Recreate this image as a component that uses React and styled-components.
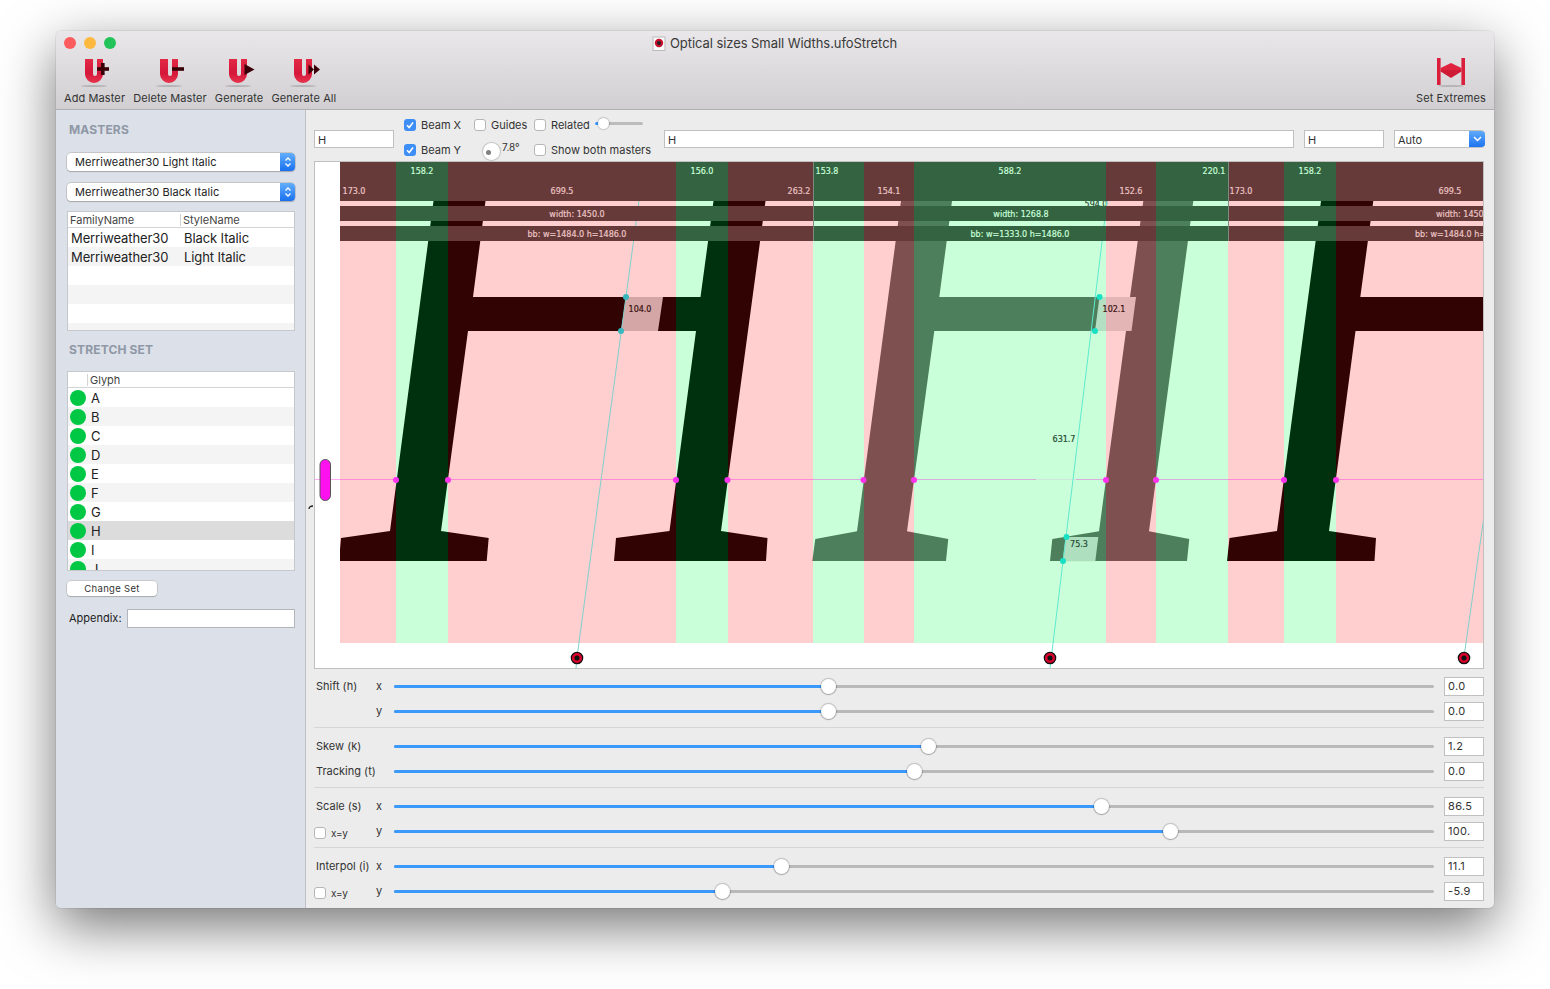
import React from "react";
import styled, { createGlobalStyle } from "styled-components";

const Global = createGlobalStyle`
  html, body { margin: 0; height: 100%; overflow: hidden; background: #fff; }
  body { font-family: Inter, "Liberation Sans", sans-serif; color: #222; -webkit-font-smoothing: antialiased; }
  * { box-sizing: border-box; }
`;

const Win = styled.div`
  position: relative; width: 1438px; height: 877px; margin: 31px 0 0 56px;
  border-radius: 5px; overflow: hidden; display: flex; flex-direction: column; background: #ececec;
  box-shadow: 0 0 0 .5px rgba(0,0,0,.12), 0 18px 55px rgba(0,0,0,.55);
`;

const Toolbar = styled.header`
  position: relative; height: 79px; flex: none; display: flex; justify-content: space-between;
  padding: 0 8px; background: linear-gradient(#e9e7e9, #d1cfd1); border-bottom: 1px solid #b0b0b0;
`;
const Lights = styled.div`
  position: absolute; left: 8px; top: 6px; display: flex; gap: 8px;
`;
const Light = styled.span`
  width: 12px; height: 12px; border-radius: 50%; background: ${p => p.$c};
`;
const Title = styled.div`
  position: absolute; left: 596px; top: 4px; display: flex; align-items: center; gap: 4px;
  font-size: 13px; line-height: 16px; color: #3a3a3a; white-space: nowrap; letter-spacing: -.07px;
`;
const ToolGroup = styled.div`
  display: flex; gap: 8px;
`;
const Tool = styled.div`
  display: flex; flex-direction: column; align-items: center; padding-top: 25px;
`;
const ToolSvg = styled.svg`
  width: 30px; height: 32px; overflow: visible; display: block;
`;
const ToolLabel = styled.span`
  margin-top: 3px; font-size: 11px; line-height: 14px; color: #333; white-space: nowrap; letter-spacing: .1px;
`;

const Body = styled.div`
  flex: 1; display: flex; min-height: 0; position: relative;
`;
const Side = styled.aside`
  width: 250px; flex: none; padding: 0 10px 0 11px; background: #dce0e8; border-right: 1px solid #bfc1c4;
  display: flex; flex-direction: column;
`;
const Heading = styled.h2`
  margin: ${p => p.$top}px 0 0 2px; font-size: 12px; line-height: 14px; font-weight: 700; color: #8f98a6; letter-spacing: .15px;
`;
const Popup = styled.div`
  margin-top: ${p => p.$top}px; height: 18px; flex: none; display: flex; align-items: center; justify-content: space-between;
  background: #fff; border-radius: 4px; box-shadow: 0 0 0 .5px #a9a9a9, 0 1px 1px rgba(0,0,0,.25);
  font-size: 11px; padding-left: 8px; overflow: hidden; color: #222; letter-spacing: .06px;
`;
const Stepper = styled.span`
  width: 15px; height: 100%; display: flex; align-items: center; justify-content: center;
  background: linear-gradient(#62aefc, #1a70ef);
`;
const Table = styled.div`
  margin-top: ${p => p.$top}px; height: ${p => p.$h}px; flex: none; background: #fff; border: 1px solid #c6c8cb; overflow: hidden;
`;
const THead = styled.div`
  height: 16px; display: flex; align-items: center; border-bottom: 1px solid #d4d4d4; font-size: 11px; color: #444;
`;
const THCell = styled.span`
  width: ${p => p.$w}px; height: 12px; line-height: 12px; padding-left: 2px;
  & + & { border-left: 1px solid #d4d4d4; }
`;
const Row = styled.div`
  height: 19px; display: flex; align-items: center; font-size: 13px; color: #222; letter-spacing: -.1px;
  background: ${p => (p.$sel ? "#dcdcdc" : p.$alt ? "#f4f4f4" : "#fff")};
`;
const TCell = styled.span`
  width: ${p => p.$w}px; padding-left: 3px; white-space: nowrap;
`;
const Dot = styled.span`
  width: 16px; height: 16px; margin-left: 2px; border-radius: 50%; background: #00c844; flex: none;
`;
const Letter = styled.span`
  margin-left: 5px;
`;
const SmallBtn = styled.button`
  margin-top: 10px; width: 90px; height: 15px; padding: 0; border: 0; border-radius: 4px; background: #fff;
  box-shadow: 0 0 0 .5px #b0b0b0, 0 1px 1px rgba(0,0,0,.25); font: 9.5px/15px Inter, sans-serif; color: #333; letter-spacing: .3px;
`;
const AppendixRow = styled.div`
  margin-top: 13px; display: flex; align-items: center; font-size: 11px; padding-left: 2px; color: #222;
`;
const AppendixLabel = styled.span`
  margin-bottom: 2px;
`;
const AppendixField = styled.div`
  width: 168px; height: 19px; margin-left: auto; background: #fff; border: 1px solid #b2b5ba;
`;

const Main = styled.main`
  flex: 1; min-width: 0; padding: 0 10px 0 8px; display: flex; flex-direction: column; position: relative;
`;
const Tick = styled.svg`
  position: absolute; left: 2px; top: 394px; width: 6px; height: 6px;
`;
const TopBar = styled.div`
  height: 51px; flex: none; display: flex; align-items: flex-start; gap: 10px; padding-top: 20px; margin-right: -1px;
`;
const Field = styled.div`
  height: 18px; flex: ${p => (p.$grow ? "1" : "none")}; width: ${p => p.$w || 80}px; background: #fff; border: 1px solid #c0c0c0;
  font-size: 11px; line-height: 18px; padding-left: 3px; color: #333;
`;
const Options = styled.div`
  width: 250px; flex: none; margin-top: -17px; position: relative; z-index: 2;
`;
const OptRow = styled.div`
  height: ${p => p.$h}px; display: flex;
`;
const OptCell = styled.div`
  width: ${p => p.$w}px; display: flex; align-items: ${p => (p.$top ? "flex-start" : "center")}; font-size: 11px; color: #333; white-space: nowrap;
`;
const Box = styled.span`
  width: 12px; height: 12px; flex: none; border-radius: 3px; margin-right: 5px; display: flex; align-items: center; justify-content: center;
  background: ${p => (p.$on ? "#3d8ff7" : "#fff")}; border: ${p => (p.$on ? "0" : "1px solid #b6b6b6")};
`;
const MiniTrack = styled.span`
  position: absolute; left: 191px; top: 9px; width: 48px; height: 3px; border-radius: 2px;
  background: linear-gradient(90deg, #3b99fc 0 6px, #bcbcbc 6px);
`;
const MiniKnob = styled.span`
  position: absolute; left: 194px; top: 5px; width: 11px; height: 11px; border-radius: 50%; background: #fff; box-shadow: 0 0 1px 1px rgba(0,0,0,.18);
`;
const Dial = styled.span`
  width: 17px; height: 17px; margin: 6px 0 0 9px; flex: none; border-radius: 50%; background: #fff;
  box-shadow: 0 0 1px 1px rgba(0,0,0,.18); position: relative;
  &::after { content: ""; position: absolute; left: 3px; top: 7px; width: 5px; height: 5px; border-radius: 50%; background: #808080; }
`;
const DialText = styled.span`
  margin: 4px 0 0 2px; font-size: 10px; line-height: 12px; color: #333;
`;
const Auto = styled.div`
  width: 91px; height: 18px; flex: none; display: flex; justify-content: space-between; background: #fff; border: 1px solid #c0c0c0; border-right: 0;
  font-size: 11px; line-height: 18px; padding-left: 3px; border-radius: 0 4px 4px 0; overflow: hidden; color: #333;
`;
const AutoBtn = styled.span`
  width: 16px; margin-top: -1px; height: 18px; display: flex; align-items: center; justify-content: center; background: linear-gradient(#62aefc, #1a70ef);
`;

const CanvasBox = styled.div`
  height: 508px; flex: none; background: #fff; border: 1px solid #c0c0c0;
`;
const CanvasSvg = styled.svg`
  display: block; width: 1168px; height: 506px; font-family: "DejaVu Sans", sans-serif; font-size: 8px;
`;
const Measure = styled.text`
  fill: ${p => p.$c}; stroke: ${p => p.$c}; stroke-width: .2px; text-anchor: ${p => (p.$start ? "start" : "middle")};
`;

const Group = styled.section`
  padding: 6px 0 3px; border-bottom: ${p => (p.$last ? "0" : "1px solid #d6d6d6")};
  &:first-of-type { padding-top: 5px; }
`;
const SRow = styled.div`
  height: 25px; display: grid; grid-template-columns: 62px 18px 1040px 40px; align-items: center; font-size: 11px; color: #333;
`;
const SLabel = styled.div`
  display: flex; align-items: center; padding-left: ${p => (p.$chk ? 0 : 2)}px; white-space: nowrap;
  font-size: ${p => (p.$chk ? 10 : 11)}px; margin-top: ${p => (p.$chk ? 2 : -2)}px;
`;
const SliderTrack = styled.div`
  position: relative; height: 3px; border-radius: 2px; background: #b9b9b9;
`;
const SliderFill = styled.div`
  height: 100%; width: ${p => p.$x}px; border-radius: 2px; background: #3b99fc;
`;
const Knob = styled.div`
  position: absolute; top: -6px; left: ${p => p.$x - 7.5}px; width: 15px; height: 15px; border-radius: 50%;
  background: #fff; box-shadow: 0 0 1px 1px rgba(0,0,0,.2), 0 1px 1px rgba(0,0,0,.15);
`;
const ValueBox = styled.div`
  width: 40px; height: 19px; background: #fff; border: 1px solid #c0c0c0; font-size: 11px; line-height: 17px; padding-left: 3px; letter-spacing: .35px; color: #333;
  grid-column: 4; margin-left: 10px;
`;
const Track = styled.div`
  grid-column: 3;
`;
const Axis = styled.div`
  grid-column: 2; margin-top: -1px;
`;

const Chev = () => (
  <svg width="8" height="12" viewBox="0 0 8 12"><path d="M1.5 4.5 4 2l2.5 2.5M1.5 7.5 4 10l2.5-2.5" fill="none" stroke="#fff" strokeWidth="1.3" /></svg>
);
const Check = () => (
  <svg width="10" height="10" viewBox="0 0 10 10"><path d="M2 5.3 4.2 7.6 8 2.6" fill="none" stroke="#fff" strokeWidth="1.6" /></svg>
);

const UDefs = () => (
  <defs>
    <linearGradient id="ug" x1="0" y1="0" x2="0" y2="1">
      <stop offset="0" stopColor="#e22a44" /><stop offset=".6" stopColor="#d5173a" /><stop offset="1" stopColor="#e8344e" />
    </linearGradient>
  </defs>
);
const U = () => (
  <>
    <ellipse cx="14" cy="30" rx="13" ry="1" fill="#000" opacity=".16" />
    <path d="M5 3H13V18a2 2 0 0 0 4 0V3H23V18a9 9 0 0 1-18 0Z" fill="url(#ug)" />
  </>
);
const glyphDark = "#3a0008";
const ToolIcons = {
  add: <><rect x="17" y="11.2" width="12" height="3.6" fill={glyphDark} /><rect x="21" y="7" width="3.6" height="12" fill={glyphDark} /></>,
  del: <rect x="17" y="11.2" width="12" height="3.6" fill={glyphDark} />,
  gen: <polygon points="20.5,8 30.5,13.5 20.5,19" fill={glyphDark} />,
  all: <><polygon points="19.5,8.5 25,13.5 19.5,18.5" fill={glyphDark} /><polygon points="25,8.5 31,13.5 25,18.5" fill={glyphDark} /></>,
};
const tools = [["Add Master", "add"], ["Delete Master", "del"], ["Generate", "gen"], ["Generate All", "all"]];

const pinkLight = "#ffcfcf", greenLight = "#c9ffd9";
const bands = [
  [340, 396, 0], [396, 448, 1], [448, 676, 0], [676, 728, 1], [728, 813, 0], [813, 864, 1], [864, 914, 0],
  [914, 1106, 1], [1106, 1156, 0], [1156, 1228, 1], [1228, 1284, 0], [1284, 1336, 1], [1336, 1483, 0],
];
const Bands = ({ pink, green, y = 162, h = 481 }) =>
  bands.map(([a, b, g]) => <rect key={a} x={a} y={y} width={b - a} height={h} fill={g ? green : pink} />);

const glyph1 = "339,561 341,538 390,531 433.5,201 485.5,201 473,297 700.5,297 713.5,201 765.5,201 721,531 767.5,538 766,561 614,561 616,538 669.5,531 696,331 468,331 441,531 488.7,538 486.7,561";
const glyph2 = "812.3,561 815.3,539 857,531.3 901,201 952,201 939.3,297 1130,297 1143.3,201 1193.3,201 1149,531.3 1189.3,539 1187,561 1050,561 1052.3,539 1099,531.3 1126,331 934.3,331 907,531.3 948.3,539 946,561";
const glyph3 = "1227,561 1229.5,538 1277,531 1321,201 1373.3,201 1360.3,297 1484,297 1484,331 1355.5,331 1329,531 1376,538 1374.5,561";

const pinkT = "#ebc4c4", greenT = "#c9ffd9";
const Canvas = () => (
  <CanvasSvg viewBox="315 162 1168 506">
    <defs>
      <clipPath id="g1"><polygon points={glyph1} /><polygon points={glyph3} /></clipPath>
      <clipPath id="g2"><polygon points={glyph2} /></clipPath>
    </defs>
    <Bands pink={pinkLight} green={greenLight} />
    <line x1="315" y1="479.5" x2="1483" y2="479.5" stroke="#ff00e6" strokeOpacity=".32" />
    <line x1="1036" y1="479.5" x2="1076" y2="479.5" stroke={greenLight} strokeOpacity=".7" />
    <g clipPath="url(#g1)"><Bands pink="#310303" green="#00310f" /></g>
    <g clipPath="url(#g2)"><Bands pink="#7e5050" green="#4d7f5c" /></g>
    <polygon points="626,297 663,297 658,331 621,331" fill="#d4a6a6" />
    <polygon points="1099.5,297 1106,297 1106,331 1095,331" fill="#b5dfc3" />
    <polygon points="1106,297 1136,297 1131.5,331 1106,331" fill="#e3b5b5" />
    <polygon points="1065.7,537 1098.3,537 1095.3,561.3 1062.7,561.3" fill="#aee0bf" />

    <Measure x="1096" y="207" $c="#2b4a36">594.0</Measure>
    <line x1="577" y1="657" x2="639" y2="201" stroke="#7fd0cc" />
    <line x1="1464" y1="657" x2="1484" y2="516" stroke="#7fd0cc" />
    <line x1="1050" y1="668" x2="1107" y2="201" stroke="#5fe8cf" />
    <line x1="576" y1="668" x2="577" y2="657" stroke="#7fd0cc" />

    <Bands pink="#673a3a" green="#336340" y={162} h={39} />
    <Bands pink="#673a3a" green="#336340" y={206} h={15} />
    <Bands pink="#673a3a" green="#336340" y={226} h={15} />
    <line x1="813.5" y1="162" x2="813.5" y2="241" stroke="#7c8a80" strokeWidth="1" />
    <line x1="1228.5" y1="162" x2="1228.5" y2="241" stroke="#7c8a80" strokeWidth="1" />

    {[396, 448, 676, 727.5, 863.5, 914, 1106, 1156, 1284, 1336].map(x => (
      <circle key={x} cx={x} cy="480" r="3" fill="#ff33ee" />
    ))}
    {[[626, 297], [621, 331]].map(([x, y]) => <circle key={x} cx={x} cy={y} r="3" fill="#38b8bd" />)}
    {[[1099.5, 297], [1095, 331], [1066.5, 537], [1063, 561]].map(([x, y]) => <circle key={x} cx={x} cy={y} r="3" fill="#18e0c4" />)}

    <rect x="320" y="459.5" width="10.5" height="41" rx="5.2" fill="#ff10ee" stroke="#555" strokeWidth="1" />
    {[577, 1050, 1464].map(x => (
      <g key={x}>
        <circle cx={x} cy="658" r="5.7" fill="#d8002c" stroke="#111" strokeWidth="1.2" />
        <circle cx={x} cy="658" r="2.5" fill="#111" />
      </g>
    ))}

    {[[422, "158.2"], [702, "156.0"], [827, "153.8"], [1010, "588.2"], [1214, "220.1"], [1310, "158.2"]].map(([x, t]) => (
      <Measure key={x} x={x} y="174" $c={greenT}>{t}</Measure>
    ))}
    {[[354, "173.0"], [562, "699.5"], [799, "263.2"], [889, "154.1"], [1131, "152.6"], [1241, "173.0"], [1450, "699.5"]].map(([x, t]) => (
      <Measure key={x} x={x} y="194" $c={pinkT}>{t}</Measure>
    ))}
    <Measure x="577" y="217" $c={pinkT}>width: 1450.0</Measure>
    <Measure x="1021" y="217" $c={greenT}>width: 1268.8</Measure>
    <Measure x="1436" y="217" $c={pinkT} $start>width: 1450.0</Measure>
    <Measure x="577" y="237" $c={pinkT}>bb: w=1484.0 h=1486.0</Measure>
    <Measure x="1020" y="237" $c={greenT}>bb: w=1333.0 h=1486.0</Measure>
    <Measure x="1415" y="237" $c={pinkT} $start>bb: w=1484.0 h=1486.0</Measure>
    <Measure x="640" y="312" $c="#3a1212">104.0</Measure>
    <Measure x="1114" y="312" $c="#3a1212">102.1</Measure>
    <Measure x="1064" y="442" $c="#1f4a30">631.7</Measure>
    <Measure x="1079" y="547" $c="#1f4a30">75.3</Measure>
  </CanvasSvg>
);

const groups = [
  [{ l: "Shift (h)", a: "x", p: 828, v: "0.0" }, { a: "y", p: 828, v: "0.0" }],
  [{ l: "Skew (k)", p: 928, v: "1.2" }, { l: "Tracking (t)", p: 914, v: "0.0" }],
  [{ l: "Scale (s)", a: "x", p: 1101, v: "86.5" }, { c: true, a: "y", p: 1170, v: "100." }],
  [{ l: "Interpol (i)", a: "x", p: 781, v: "11.1" }, { c: true, a: "y", p: 722, v: "-5.9" }],
];

const glyphsList = ["A", "B", "C", "D", "E", "F", "G", "H", "I", "J"];

export default function App() {
  return (
    <>
      <Global />
      <Win>
        <Toolbar>
          <Lights>
            <Light $c="#fc5c5e" /><Light $c="#fdb83f" /><Light $c="#22c45a" />
          </Lights>
          <Title>
            <svg width="14" height="15" viewBox="0 0 14 15">
              <rect x="1" y="1" width="12" height="13.5" fill="#f8f8f8" stroke="#bbb" />
              <circle cx="7" cy="7" r="4.2" fill="#c8102e" />
              <circle cx="7" cy="7" r="2" fill="#222" />
            </svg>
            Optical sizes Small Widths.ufoStretch
          </Title>
          <ToolGroup>
            {tools.map(([label, k], i) => (
              <Tool key={k}>
                <ToolSvg viewBox="0 0 30 32">
                  {i === 0 && <UDefs />}
                  <U />
                  {ToolIcons[k]}
                </ToolSvg>
                <ToolLabel>{label}</ToolLabel>
              </Tool>
            ))}
          </ToolGroup>
          <Tool>
            <ToolSvg viewBox="0 0 30 32">
              <ellipse cx="15" cy="30" rx="13" ry="1" fill="#000" opacity=".16" />
              <rect x="1" y="2" width="3.6" height="27" fill="#d91f3c" />
              <rect x="25.4" y="2" width="3.6" height="27" fill="#d91f3c" />
              <polygon points="4.6,12 15,7 25.4,12 25.4,14 4.6,14" fill="#e0243f" />
              <polygon points="4.6,14 25.4,14 25.4,15.5 15,22 4.6,15.5" fill="#cf1a36" />
            </ToolSvg>
            <ToolLabel>Set Extremes</ToolLabel>
          </Tool>
        </Toolbar>
        <Body>
          <Side>
            <Heading $top={13}>MASTERS</Heading>
            <Popup $top={16}>Merriweather30 Light Italic<Stepper><Chev /></Stepper></Popup>
            <Popup $top={12}>Merriweather30 Black Italic<Stepper><Chev /></Stepper></Popup>
            <Table $top={10} $h={120}>
              <THead><THCell $w={112}>FamilyName</THCell><THCell $w={110}>StyleName</THCell></THead>
              <Row><TCell $w={113}>Merriweather30</TCell><TCell>Black Italic</TCell></Row>
              <Row $alt><TCell $w={113}>Merriweather30</TCell><TCell>Light Italic</TCell></Row>
              <Row /><Row $alt /><Row /><Row $alt />
            </Table>
            <Heading $top={12}>STRETCH SET</Heading>
            <Table $top={14} $h={200}>
              <THead><THCell $w={19} /><THCell $w={100}>Glyph</THCell></THead>
              {glyphsList.map((g, i) => (
                <Row key={g} $alt={i % 2 === 1} $sel={g === "H"}>
                  <Dot /><Letter>{g}</Letter>
                </Row>
              ))}
            </Table>
            <SmallBtn>Change Set</SmallBtn>
            <AppendixRow><AppendixLabel>Appendix:</AppendixLabel><AppendixField /></AppendixRow>
          </Side>
          <Main>
            <Tick viewBox="0 0 6 6"><path d="M1 5C1 3 2.5 2 5 2" fill="none" stroke="#222" strokeWidth="1.3" /></Tick>
            <TopBar>
              <Field>H</Field>
              <Options>
                <OptRow $h={24}>
                  <OptCell $w={70}><Box $on><Check /></Box>Beam X</OptCell>
                  <OptCell $w={60}><Box />Guides</OptCell>
                  <OptCell $w={60}><Box />Related</OptCell>
                  <MiniTrack /><MiniKnob />
                </OptRow>
                <OptRow $h={26}>
                  <OptCell $w={70}><Box $on><Check /></Box>Beam Y</OptCell>
                  <OptCell $w={60} $top><Dial /><DialText>7.8°</DialText></OptCell>
                  <OptCell $w={120}><Box />Show both masters</OptCell>
                </OptRow>
              </Options>
              <Field $grow>H</Field>
              <Field>H</Field>
              <Auto>Auto<AutoBtn>
                <svg width="9" height="6" viewBox="0 0 9 6"><path d="M1 1l3.5 3.5L8 1" fill="none" stroke="#fff" strokeWidth="1.5" /></svg>
              </AutoBtn></Auto>
            </TopBar>
            <CanvasBox><Canvas /></CanvasBox>
            {groups.map((rows, gi) => (
              <Group key={gi} $last={gi === 3}>
                {rows.map((r, ri) => (
                  <SRow key={ri}>
                    <SLabel $chk={r.c}>
                      {r.c && <Box />}
                      {r.c ? "x=y" : r.l}
                    </SLabel>
                    <Axis>{r.a}</Axis>
                    <Track>
                      <SliderTrack>
                        <SliderFill $x={r.p - 394} />
                        <Knob $x={r.p - 394} />
                      </SliderTrack>
                    </Track>
                    <ValueBox>{r.v}</ValueBox>
                  </SRow>
                ))}
              </Group>
            ))}
          </Main>
        </Body>
      </Win>
    </>
  );
}
